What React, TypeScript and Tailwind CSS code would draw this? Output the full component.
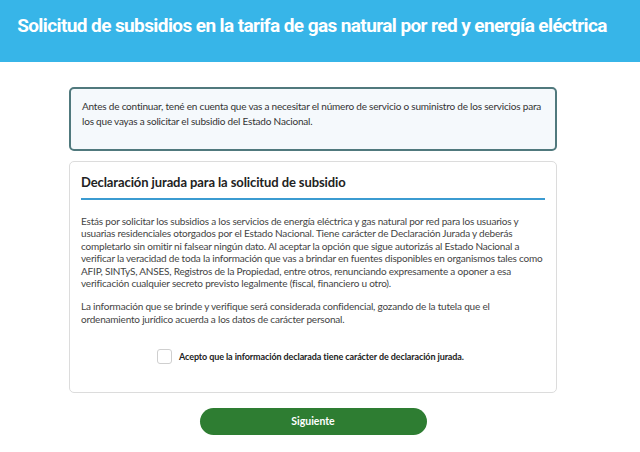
import { useState } from "react";

export default function App() {
  const [accepted, setAccepted] = useState(false);

  return (
    <div className="min-h-[452px] w-full bg-white font-['Lato','Open_Sans',sans-serif] text-[#333]">
      {/* Encabezado */}
      <header className="h-[62px] bg-[#37b5e8] pr-[16px] pt-[13px] text-center">
        <h1 className="whitespace-nowrap font-['Roboto',sans-serif] text-[19px] font-bold leading-[26px] tracking-[-0.6px] text-white">
          Solicitud de subsidios en la tarifa de gas natural por red y energía eléctrica
        </h1>
      </header>

      <main className="ml-[69px] w-[488px] pt-[25px]">
        {/* Aviso previo */}
        <div className="h-[64px] rounded-[5px] border-2 border-[#50797d] bg-[#f5f9fc] px-[11px] pt-[10px] text-[10px] leading-[15px] tracking-[-0.2px] text-[#333]">
          Antes de continuar, tené en cuenta que vas a necesitar el número de servicio o suministro de los servicios para
          los que vayas a solicitar el subsidio del Estado Nacional.
        </div>

        {/* Declaración jurada */}
        <section className="mt-[10px] h-[232px] rounded-[5px] border border-[#dcdcdc] bg-white px-[11px] pt-[10px]">
          <h2 className="border-b-2 border-[#3b9bd1] pb-[6px] text-[13px] font-bold leading-[20px] tracking-[-0.1px] text-[#222]">
            Declaración jurada para la solicitud de subsidio
          </h2>
          <p className="mt-[15px] text-[10px] leading-[12.4px] tracking-[-0.2px] text-[#444]">
            Estás por solicitar los subsidios a los servicios de energía eléctrica y gas natural por red para los usuarios y
            usuarias residenciales otorgados por el Estado Nacional. Tiene carácter de Declaración Jurada y deberás
            completarlo sin omitir ni falsear ningún dato. Al aceptar la opción que sigue autorizás al Estado Nacional a
            verificar la veracidad de toda la información que vas a brindar en fuentes disponibles en organismos tales como
            AFIP, SINTyS, ANSES, Registros de la Propiedad, entre otros, renunciando expresamente a oponer a esa
            verificación cualquier secreto previsto legalmente (fiscal, financiero u otro).
          </p>
          <p className="mt-[11px] text-[10px] leading-[12.4px] tracking-[-0.2px] text-[#444]">
            La información que se brinde y verifique será considerada confidencial, gozando de la tutela que el
            ordenamiento jurídico acuerda a los datos de carácter personal.
          </p>
          <label className="mt-[24px] flex items-center gap-[7px] pl-[76px]">
            <input
              type="checkbox"
              checked={accepted}
              onChange={(e) => setAccepted(e.target.checked)}
              className="h-[15px] w-[15px] appearance-none rounded-[3px] border border-[#cfcfcf] bg-white checked:bg-[#37b5e8]"
            />
            <span className="text-[9px] font-bold tracking-[-0.1px] text-[#222]">
              Acepto que la información declarada tiene carácter de declaración jurada.
            </span>
          </label>
        </section>

        <div className="mt-[15px] flex justify-center">
          <button className="h-[27px] w-[227px] rounded-full bg-[#2e7d32] text-[10.5px] font-bold text-white">
            Siguiente
          </button>
        </div>
      </main>
    </div>
  );
}
